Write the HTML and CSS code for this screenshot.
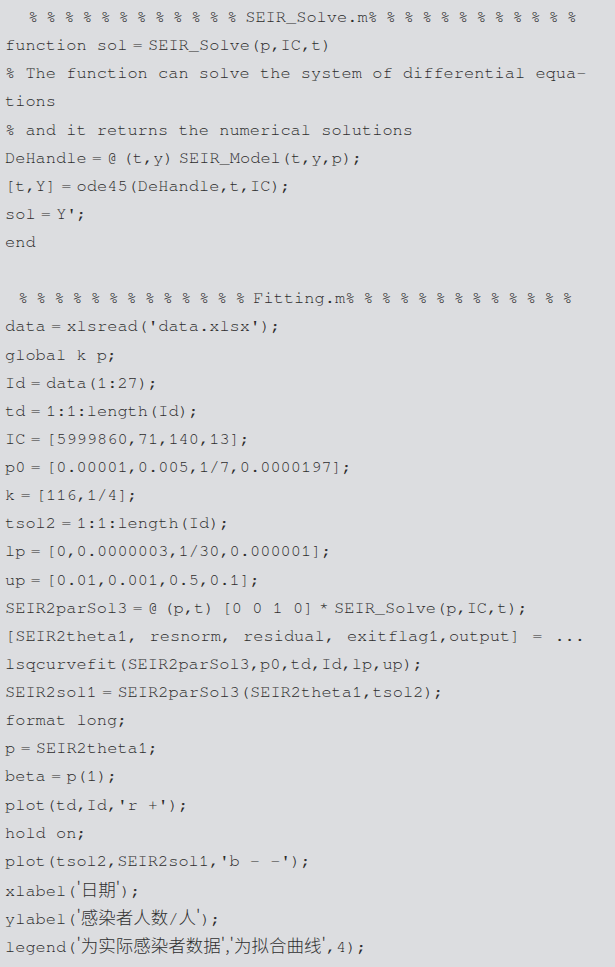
FILE: index.html
```html
<!DOCTYPE html>
<html lang="zh-CN">
<head>
<meta charset="utf-8">
<title>SEIR code listing</title>
<link rel="stylesheet" href="styles.css">
</head>
<body>
<div class="listing">
<div class="ln pct pct-a">% % % % % % % % % % % % SEIR_Solve.m% % % % % % % % % % % %</div>
<div class="ln">function sol<span class="t"> = </span>SEIR_Solve(p,IC,t)</div>
<div class="ln">% The function can solve the system of differential equa-</div>
<div class="ln">tions</div>
<div class="ln">% and it returns the numerical solutions</div>
<div class="ln">DeHandle<span class="t"> = @ (t,y) </span>SEIR_Model(t,y,p);</div>
<div class="ln">[t,Y]<span class="t"> = </span>ode45(DeHandle,t,IC);</div>
<div class="ln">sol<span class="t"> = </span>Y';</div>
<div class="ln">end</div>
<div class="ln blank"></div>
<div class="ln pct pct-b">% % % % % % % % % % % % % Fitting.m% % % % % % % % % % % % %</div>
<div class="ln">data<span class="t"> = </span>xlsread('data.xlsx');</div>
<div class="ln">global k p;</div>
<div class="ln">Id<span class="t"> = </span>data(1:27);</div>
<div class="ln">td<span class="t"> = </span>1:1:length(Id);</div>
<div class="ln">IC<span class="t"> = </span>[5999860,71,140,13];</div>
<div class="ln">p0<span class="t"> = </span>[0.00001,0.005,1/7,0.0000197];</div>
<div class="ln">k<span class="t"> = </span>[116,1/4];</div>
<div class="ln">tsol2<span class="t"> = </span>1:1:length(Id);</div>
<div class="ln">lp<span class="t"> = </span>[0,0.0000003,1/30,0.000001];</div>
<div class="ln">up<span class="t"> = </span>[0.01,0.001,0.5,0.1];</div>
<div class="ln">SEIR2parSol3<span class="t"> = @ (</span>p,t)<span class="h"> </span>[0 0 1 0]<span class="t"> * </span>SEIR_Solve(p,IC,t);</div>
<div class="ln just">[SEIR2theta1, resnorm, residual, exitflag1,output] = ...</div>
<div class="ln">lsqcurvefit(SEIR2parSol3,p0,td,Id,lp,up);</div>
<div class="ln">SEIR2sol1<span class="t"> = </span>SEIR2parSol3(SEIR2theta1,tsol2);</div>
<div class="ln">format long;</div>
<div class="ln">p<span class="t"> = </span>SEIR2theta1;</div>
<div class="ln">beta<span class="t"> = </span>p(1);</div>
<div class="ln">plot(td,Id,'r +');</div>
<div class="ln">hold on;</div>
<div class="ln">plot(tsol2,SEIR2sol1,'b - -');</div>
<div class="ln">xlabel(<span class="cjk">'日期'</span>);</div>
<div class="ln">ylabel(<span class="cjk">'感染者人数</span>/<span class="cjk">人'</span>);</div>
<div class="ln">legend(<span class="cjk">'为实际感染者数据','为拟合曲线'</span>,4);</div>
</div>
</body>
</html>
```

FILE: styles.css
```css
html, body {
  margin: 0;
  padding: 0;
  background: #dcdde0;
}

.listing {
  width: 580px;
  padding: 3px 0 0 5px;
  font-family: "Nimbus Mono PS", "FreeMono", "Liberation Mono", monospace;
  font-size: 17px;
  line-height: 28.13px;
  color: #2c2c2c;
}

.ln {
  white-space: pre;
  height: 28.13px;
}

.just {
  white-space: normal;
  text-align: justify;
  text-align-last: justify;
}

.pct {
  word-spacing: -2.3px;
}

.pct-a {
  padding-left: 23px;
}

.pct-b {
  padding-left: 13px;
}

.t {
  word-spacing: -5px;
}

.h {
  word-spacing: -3px;
}

.cjk {
  font-family: "Noto Sans CJK SC", sans-serif;
  font-size: 17.5px;
  font-weight: 300;
  color: #303030;
}
```
